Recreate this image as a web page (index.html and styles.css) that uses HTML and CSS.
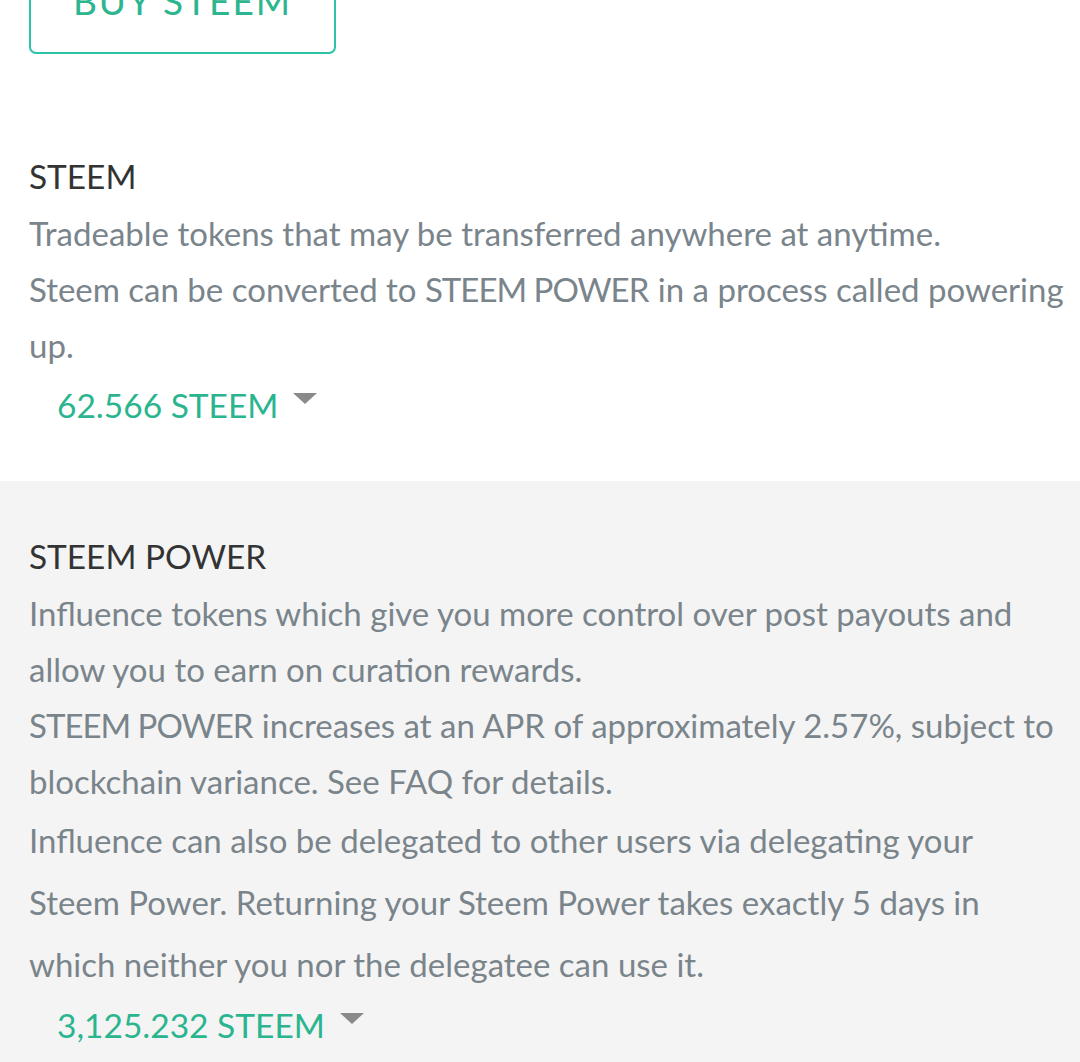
FILE: index.html
```html
<!DOCTYPE html>
<html>
<head>
<meta charset="utf-8">
<link rel="stylesheet" href="styles.css">
</head>
<body>
<section class="row row-white">
  <button class="buy-btn">BUY STEEM</button>
  <h3 class="row-title">STEEM</h3>
  <p class="desc">Tradeable tokens that may be transferred anywhere at anytime.</p>
  <p class="desc">Steem can be converted to <span class="caps">STEEM POWER</span> in a process called powering up.</p>
  <div class="amount"><span>62.566 STEEM</span><span class="caret"></span></div>
</section>
<section class="row row-grey">
  <h3 class="row-title">STEEM POWER</h3>
  <p class="desc">Influence tokens which give you more control over post payouts and allow you to earn on curation rewards.</p>
  <p class="desc"><span class="caps">STEEM POWER</span> increases at an APR of approximately 2.57%, subject to blockchain variance. See FAQ for details.</p>
  <p class="desc desc-wide">Influence can also be delegated to other users via delegating your Steem Power. Returning your Steem Power takes exactly 5 days in which neither you nor the delegatee can use it.</p>
  <div class="amount amount-sp"><span>3,125.232 STEEM</span><span class="caret"></span></div>
</section>
</body>
</html>
```

FILE: styles.css
```css
html, body {
  margin: 0;
  padding: 0;
  background: #ffffff;
}
body {
  font-family: Lato, "Open Sans", sans-serif;
  width: 1080px;
  height: 1062px;
  overflow: hidden;
}
.row {
  padding: 0 15px 0 29px;
}
.row-white {
  background: #ffffff;
  padding-bottom: 54px;
}
.row-grey {
  background: #f4f4f4;
  padding-top: 53px;
  padding-bottom: 40px;
}
.buy-btn {
  display: block;
  margin: -39px 0 0 0;
  width: 307px;
  height: 93px;
  background: #fff;
  border: 2px solid #2cc4a6;
  border-radius: 7px;
  color: #2cb58f;
  font-family: inherit;
  font-size: 37px;
  letter-spacing: 2px;
  line-height: 40px;
  padding: 0 0 14px 0;
}
.row-title {
  margin: 100px 0 0 0;
  font-size: 33.4px;
  line-height: 44px;
  font-weight: 400;
  color: #333333;
}
.row-grey .row-title {
  margin-top: 0;
}
.desc {
  margin: 0;
  font-size: 33px;
  line-height: 56px;
  color: #7a848b;
}
.caps {
  letter-spacing: -1px;
  margin-right: 1px;
}
.row-title + .desc {
  margin-top: 7px;
}
.desc-wide {
  line-height: 62px;
}
.amount {
  display: flex;
  align-items: flex-start;
  margin: 10px 0 0 28px;
  font-size: 33.5px;
  line-height: 44px;
  color: #2bb58f;
}
.amount-sp {
  margin-top: 8px;
}
.caret {
  width: 0;
  height: 0;
  margin: 10px 0 0 15px;
  border-left: 12px solid transparent;
  border-right: 12px solid transparent;
  border-top: 11px solid #8a8a8a;
}
```
